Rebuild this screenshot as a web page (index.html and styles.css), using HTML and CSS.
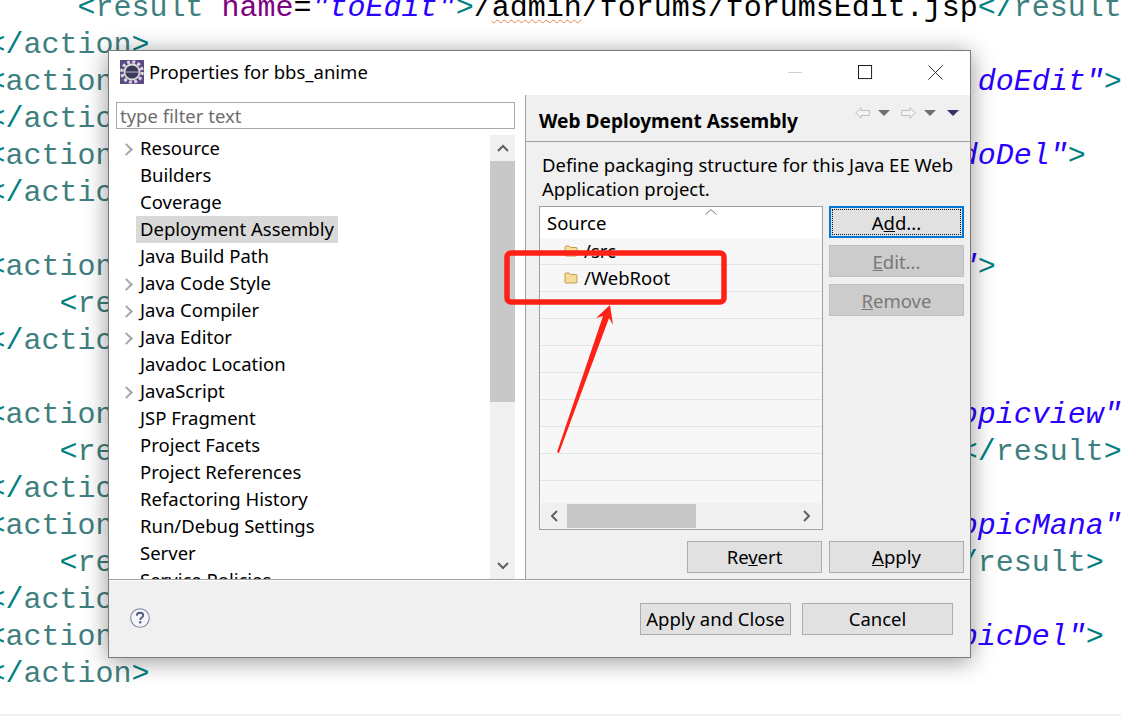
FILE: index.html
```html
<!DOCTYPE html>
<html lang="en">
<head>
<meta charset="utf-8">
<title>Properties for bbs_anime</title>
<link rel="stylesheet" href="styles.css">
</head>
<body>
<pre class="code">     <span class="tag">&lt;</span><span class="el">result</span> <span class="attr">name</span>=<span class="val">"toEdit"</span><span class="tag">&gt;</span>/<span class="squig">admin</span>/forums/forumsEdit.jsp<span class="tag">&lt;/</span><span class="el">result</span><span class="tag">&gt;</span>
<span class="tag">&lt;/</span><span class="el">action</span><span class="tag">&gt;</span>
<span class="tag">&lt;</span><span class="el">action</span>                                                <span class="val">doEdit"</span><span class="tag">&gt;</span>
<span class="tag">&lt;/</span><span class="el">action</span><span class="tag">&gt;</span>
<span class="tag">&lt;</span><span class="el">action</span>                                               <span class="val">doDel"</span><span class="tag">&gt;</span>
<span class="tag">&lt;/</span><span class="el">action</span><span class="tag">&gt;</span>

<span class="tag">&lt;</span><span class="el">action</span>                                               <span class="val">"</span><span class="tag">&gt;</span>
    <span class="tag">&lt;</span><span class="el">result</span>
<span class="tag">&lt;/</span><span class="el">action</span><span class="tag">&gt;</span>

<span class="tag">&lt;</span><span class="el">action</span>                                              <span class="val">topicview"</span>
    <span class="tag">&lt;</span><span class="el">result</span>                                           <span class="tag">&lt;/</span><span class="el">result</span><span class="tag">&gt;</span>
<span class="tag">&lt;/</span><span class="el">action</span><span class="tag">&gt;</span>
<span class="tag">&lt;</span><span class="el">action</span>                                              <span class="val">topicMana"</span>
    <span class="tag">&lt;</span><span class="el">result</span>                                           <span class="tag">/</span><span class="el">result</span><span class="tag">&gt;</span>
<span class="tag">&lt;/</span><span class="el">action</span><span class="tag">&gt;</span>
<span class="tag">&lt;</span><span class="el">action</span>                                             <span class="val">topicDel"</span><span class="tag">&gt;</span>
<span class="tag">&lt;/</span><span class="el">action</span><span class="tag">&gt;</span></pre>
<div class="page-foot"></div>

<div class="dialog">
  <header class="titlebar">
    <svg class="app-icon" viewBox="0 0 24 24" aria-hidden="true">
      <rect width="24" height="24" fill="#5b4a86"/>
      <circle cx="12" cy="12" r="10.2" fill="none" stroke="#d8d8d8" stroke-width="3.2" stroke-dasharray="2.9 2.45"/>
      <circle cx="12" cy="12" r="8.4" fill="#dcdcdc"/>
      <circle cx="12" cy="12" r="6.6" fill="#3c3a5c"/>
      <rect x="5.6" y="11.4" width="12.8" height="1.3" fill="#9a98b4"/>
    </svg>
    <span class="title">Properties for bbs_anime</span>
    <div class="win-btns">
      <svg class="win-btn" viewBox="0 0 16 16" aria-hidden="true"><path d="M0 8h15" stroke="#cfcfcf" fill="none"/></svg>
      <svg class="win-btn" viewBox="0 0 16 16" aria-hidden="true"><rect x="0.5" y="0.5" width="14" height="14" fill="none" stroke="#111"/></svg>
      <svg class="win-btn" viewBox="0 0 16 16" aria-hidden="true"><path d="M0.5 0.5L15.5 15.5M15.5 0.5L0.5 15.5" stroke="#222" fill="none"/></svg>
    </div>
  </header>

  <div class="main">
    <aside class="nav">
      <div class="filter">type filter text</div>
      <div class="tree-wrap">
        <ul class="tree">
          <li class="tree-row has-kids">Resource</li>
          <li class="tree-row">Builders</li>
          <li class="tree-row">Coverage</li>
          <li class="tree-row"><span class="selected">Deployment Assembly</span></li>
          <li class="tree-row">Java Build Path</li>
          <li class="tree-row has-kids">Java Code Style</li>
          <li class="tree-row has-kids">Java Compiler</li>
          <li class="tree-row has-kids">Java Editor</li>
          <li class="tree-row">Javadoc Location</li>
          <li class="tree-row has-kids">JavaScript</li>
          <li class="tree-row">JSP Fragment</li>
          <li class="tree-row">Project Facets</li>
          <li class="tree-row">Project References</li>
          <li class="tree-row">Refactoring History</li>
          <li class="tree-row">Run/Debug Settings</li>
          <li class="tree-row">Server</li>
          <li class="tree-row">Service Policies</li>
        </ul>
        <div class="vscroll">
          <div class="sb-btn">
            <svg viewBox="0 0 12 8" class="sb-v" aria-hidden="true"><path d="M1 7L6 2L11 7" fill="none" stroke="#606060" stroke-width="2"/></svg>
          </div>
          <div class="vthumb"></div>
          <div class="sb-fill"></div>
          <div class="sb-btn">
            <svg viewBox="0 0 12 8" class="sb-v" aria-hidden="true"><path d="M1 1L6 6L11 1" fill="none" stroke="#606060" stroke-width="2"/></svg>
          </div>
        </div>
      </div>
    </aside>

    <section class="content">
      <div class="content-head">
        <h1 class="heading">Web Deployment Assembly</h1>
        <div class="nav-arrows">
          <svg class="hist" viewBox="0 0 15 12" aria-hidden="true"><path d="M0.7 6L6 0.8V3.5H14.3V8.5H6V11.2Z" fill="#f4f4f4" stroke="#bdbdbd"/></svg>
          <svg class="drop" viewBox="0 0 12 6" aria-hidden="true"><path d="M0 0H12L6 6Z" fill="#6e6e6e"/></svg>
          <svg class="hist" viewBox="0 0 15 12" aria-hidden="true"><path d="M14.3 6L9 0.8V3.5H0.7V8.5H9V11.2Z" fill="#f4f4f4" stroke="#bdbdbd"/></svg>
          <svg class="drop" viewBox="0 0 12 6" aria-hidden="true"><path d="M0 0H12L6 6Z" fill="#6e6e6e"/></svg>
          <svg class="drop" viewBox="0 0 12 6" aria-hidden="true"><path d="M0 0H12L6 6Z" fill="#3c2a6a"/></svg>
        </div>
      </div>
      <div class="content-body">
        <p class="desc">Define packaging structure for this Java EE Web Application project.</p>
        <div class="assembly">
          <div class="table">
            <div class="thead">Source
              <svg class="sort" viewBox="0 0 12 6" aria-hidden="true"><path d="M0.5 5.5L6 0.7L11.5 5.5" fill="none" stroke="#777"/></svg>
            </div>
            <div class="tbody">
              <div class="trow">
                <svg class="folder" viewBox="0 0 14 12" aria-hidden="true"><path d="M1 2.2Q1 1 2 1H5L6.5 2.5H12Q13 2.5 13 3.5V10Q13 11 12 11H2Q1 11 1 10Z" fill="#f6dd9a" stroke="#c49a4e"/></svg>
                /src
              </div>
              <div class="trow">
                <svg class="folder" viewBox="0 0 14 12" aria-hidden="true"><path d="M1 2.2Q1 1 2 1H5L6.5 2.5H12Q13 2.5 13 3.5V10Q13 11 12 11H2Q1 11 1 10Z" fill="#f6dd9a" stroke="#c49a4e"/></svg>
                /WebRoot
              </div>
              <div class="trow"></div><div class="trow"></div><div class="trow"></div>
              <div class="trow"></div><div class="trow"></div><div class="trow"></div><div class="trow"></div>
            </div>
            <div class="hscroll">
              <svg class="sb-h" viewBox="0 0 8 12" aria-hidden="true"><path d="M7 1L2 6L7 11" fill="none" stroke="#606060" stroke-width="2"/></svg>
              <div class="hthumb"></div>
              <svg class="sb-h" viewBox="0 0 8 12" aria-hidden="true"><path d="M1 1L6 6L1 11" fill="none" stroke="#606060" stroke-width="2"/></svg>
            </div>
          </div>
          <div class="side-btns">
            <button class="btn btn-wide btn-focus"><span class="focus-ring">A<u>d</u>d...</span></button>
            <button class="btn btn-wide btn-off"><u>E</u>dit...</button>
            <button class="btn btn-wide btn-off"><u>R</u>emove</button>
          </div>
        </div>
        <div class="apply-row">
          <button class="btn btn-wide btn-raised">Re<u>v</u>ert</button>
          <button class="btn btn-wide btn-raised"><u>A</u>pply</button>
        </div>
      </div>
    </section>
  </div>

  <footer class="footer">
    <svg class="help" viewBox="0 0 20 20" aria-hidden="true">
      <circle cx="10" cy="10" r="9.3" fill="#f7f7f9" stroke="#7c86a4" stroke-width="1.1"/>
      <path d="M6.8 7.6C6.9 5.6 8.3 4.8 10 4.8C11.9 4.8 13.2 5.8 13.2 7.4C13.2 9.6 10.2 9.6 10.2 12" fill="none" stroke="#4e5a7e" stroke-width="1.9"/>
      <rect x="9.1" y="13.2" width="2.2" height="2.2" fill="#4e5a7e"/>
    </svg>
    <div class="footer-btns">
      <button class="btn btn-close btn-raised">Apply and Close</button>
      <button class="btn btn-close btn-raised">Cancel</button>
    </div>
  </footer>
</div>

<svg class="annotation" viewBox="0 0 1121 716" aria-hidden="true">
  <rect x="507" y="253" width="217" height="49" rx="4" fill="none" stroke="#ff2116" stroke-width="5.5"/>
  <polygon points="610,305 613,325 609,318 559,453 557,452 603,316 596,318" fill="#ff2116"/>
</svg>
</body>
</html>
```
FILE: styles.css
```css
* { box-sizing: border-box; }
html, body { margin: 0; height: 100%; }
body {
  width: 1121px;
  height: 716px;
  overflow: hidden;
  background: #fff;
  font-family: "Noto Sans", "Open Sans", sans-serif;
  position: relative;
}
.code {
  margin: -10px 0 0 -12.5px;
  font-family: "Liberation Mono", monospace;
  font-size: 30px;
  line-height: 37px;
  color: #000;
  white-space: pre;
}
.tag { color: #008080; }
.el { color: #3f7f7f; }
.attr { color: #7f007f; }
.val { color: #2a00ff; font-style: italic; }
.squig { text-decoration: underline wavy #e8804f 1px; text-underline-offset: 3px; }
.page-foot {
  position: absolute;
  left: 0; right: 0; bottom: 0;
  height: 2px;
  background: #f0f0f0;
}
.dialog {
  position: absolute;
  left: 108px;
  top: 50px;
  width: 863px;
  height: 608px;
  display: flex;
  flex-direction: column;
  background: #f0f0f0;
  border: 1px solid #7b7b7b;
  box-shadow: 0 3px 22px rgba(0,0,0,.42);
  font-size: 18.5px;
  color: #000;
}
.titlebar {
  height: 44px;
  flex: none;
  display: flex;
  align-items: center;
  background: #fff;
  padding: 0 0 2px 11px;
}
.app-icon { width: 24px; height: 24px; flex: none; }
.title { margin-left: 5px; padding-bottom: 2px; }
.win-btns {
  margin-left: auto;
  display: flex;
  gap: 55px;
  padding-right: 27px;
}
.win-btn { width: 15px; height: 15px; display: block; }
.main { flex: none; height: 485px; display: flex; border-bottom: 1px solid #a0a0a0; }
.nav {
  width: 417px;
  flex: none;
  background: #fff;
  border-right: 1px solid #a0a0a0;
  padding: 7px 10px 0 7px;
  display: flex;
  flex-direction: column;
}
.filter {
  height: 27px;
  flex: none;
  border: 1px solid #a9a9a9;
  line-height: 25px;
  padding-left: 3px;
  color: #6d6d6d;
}
.tree-wrap { flex: 1; min-height: 0; display: flex; margin-top: 6px; }
.tree { flex: 1; margin: 0; padding: 0; list-style: none; overflow: hidden; }
.tree-row {
  height: 27px;
  line-height: 25px;
  padding-left: 24px;
  white-space: nowrap;
  position: relative;
  display: flex;
  align-items: flex-start;
}
.has-kids::before {
  content: "";
  position: absolute;
  left: 6px;
  top: 10px;
  width: 7px;
  height: 7px;
  border-top: 2px solid #a6a6a6;
  border-right: 2px solid #a6a6a6;
  transform: rotate(45deg);
}
.selected {
  height: 27px;
  background: #d9d9d9;
  margin-left: -4px;
  padding: 0 4px;
}
.vscroll { width: 25px; flex: none; display: flex; flex-direction: column; background: #f0f0f0; }
.sb-btn { height: 26px; flex: none; display: flex; align-items: center; justify-content: center; }
.sb-v { width: 12px; height: 8px; }
.vthumb { height: 241px; flex: none; background: #c8c8c8; }
.sb-fill { flex: 1; }
.content { flex: 1; min-width: 0; display: flex; flex-direction: column; }
.content-head {
  height: 47px;
  flex: none;
  display: flex;
  border-bottom: 1px solid #a0a0a0;
  padding-left: 13px;
  position: relative;
}
.heading {
  margin: 13px 0 0;
  font-size: 19.1px;
  line-height: 27px;
  font-weight: 700;
}
.nav-arrows {
  position: absolute;
  right: 11px;
  top: 12px;
  display: flex;
  align-items: center;
  gap: 8px;
}
.hist { width: 15px; height: 12px; }
.drop { width: 12px; height: 6px; margin-right: 3px; }
.drop:last-child { margin-right: 0; }
.content-body { flex: 1; min-height: 0; padding: 11px 6px 0 13px; display: flex; flex-direction: column; }
.desc { margin: 0 0 0 3px; width: 425px; line-height: 24px; }
.assembly { display: flex; gap: 6px; margin-top: 5px; }
.table {
  width: 284px;
  height: 324px;
  border: 1px solid #a0a0a0;
  background: #f7f7f7;
  display: flex;
  flex-direction: column;
}
.thead {
  height: 31px;
  flex: none;
  background: #fff;
  line-height: 31px;
  padding-left: 7px;
  position: relative;
}
.sort { position: absolute; left: 165px; top: 2px; width: 12px; height: 6px; }
.tbody { flex: 1; min-height: 0; overflow: hidden; }
.trow {
  height: 27px;
  border-bottom: 1px solid #e4e4e4;
  padding: 0 0 2px 24px;
  display: flex;
  align-items: center;
  gap: 6px;
}
.folder { width: 14px; height: 12px; flex: none; margin-top: 2px; }
.hscroll {
  height: 25px;
  flex: none;
  background: #f0f0f0;
  margin: 0 1px 1px;
  display: flex;
  align-items: center;
  padding: 0 10px 0 9px;
}
.sb-h { width: 8px; height: 12px; flex: none; }
.hthumb { width: 129px; height: 24px; background: #c8c8c8; margin-left: 9px; margin-right: auto; }
.side-btns { display: flex; flex-direction: column; gap: 7px; }
.btn {
  display: block;
  height: 32px;
  padding: 0;
  background: #e1e1e1;
  border: 1px solid #adadad;
  font: inherit;
  color: #000;
  text-align: center;
}
.btn-wide { width: 135px; }
.btn-raised { padding-bottom: 2px; }
.btn-focus { border: 2px solid #0078d7; padding: 1px; }
.focus-ring { display: block; height: 26px; line-height: 25px; border: 1px dotted #111; }
.btn-off { background: #cccccc; border-color: #bfbfbf; color: #787878; }
.apply-row { display: flex; justify-content: flex-end; gap: 7px; margin-top: 11px; }
.footer { flex: 1; display: flex; align-items: center; position: relative; border-top: 1px solid #fff; }
.help { position: absolute; left: 21px; top: 27px; width: 20px; height: 20px; }
.footer-btns { margin-left: auto; display: flex; gap: 11px; padding-right: 17px; }
.btn-close { width: 151px; }
.annotation { position: absolute; left: 0; top: 0; width: 1121px; height: 716px; pointer-events: none; }
```
